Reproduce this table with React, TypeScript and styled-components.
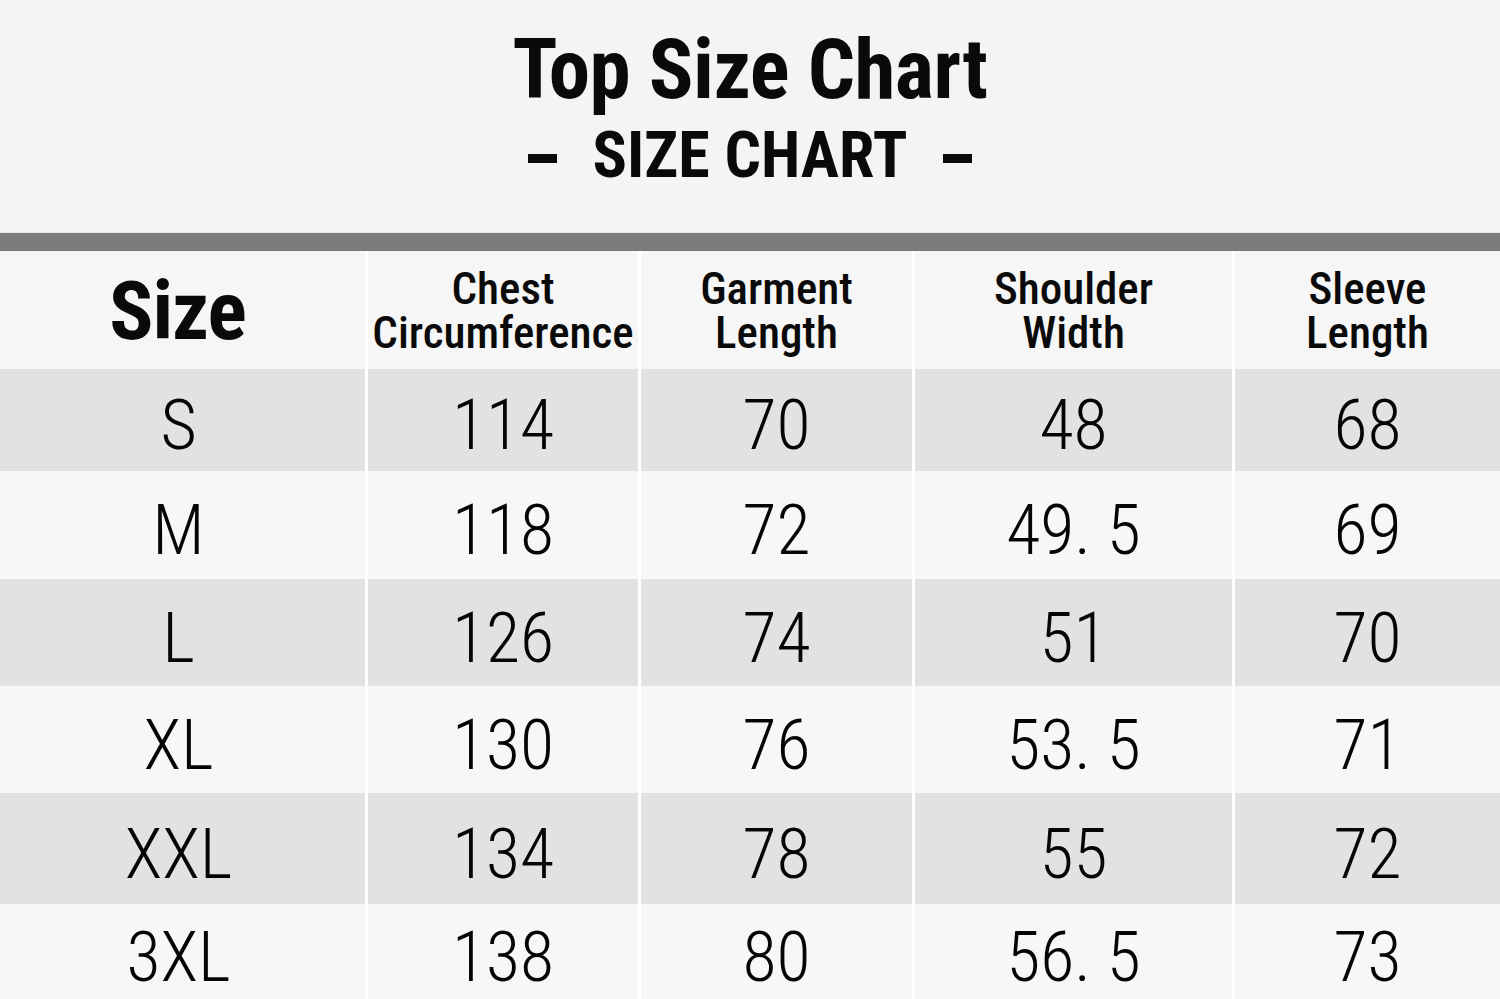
import React from "react";
import styled, { createGlobalStyle } from "styled-components";

const Global = createGlobalStyle`
  html, body { margin: 0; padding: 0; background: #f4f4f4; }
  body { font-family: "Roboto Condensed", "Liberation Sans", sans-serif; color: #0a0a0a; }
  #root { width: 1500px; height: 999px; overflow: hidden; }
`;

const Page = styled.div`
  width: 1500px;
  height: 999px;
  display: flex;
  flex-direction: column;
  overflow: hidden;
  background: #f4f4f4;
`;

const Header = styled.header`
  flex: none;
  height: 232px;
  display: flex;
  flex-direction: column;
  align-items: center;
  background: #f4f4f4;
  box-sizing: border-box;
  padding-top: 22px;
`;

const Title = styled.h1`
  margin: 0;
  font-family: "Roboto Condensed", sans-serif;
  font-weight: 700;
  font-size: 83px;
  line-height: 96px;
  letter-spacing: -0.5px;
  color: #0a0a0a;
`;

const Subtitle = styled.div`
  display: flex;
  align-items: center;
  gap: 36px;
  font-family: "Roboto Condensed", sans-serif;
  font-weight: 700;
  font-size: 64px;
  line-height: 76px;
  color: #0a0a0a;
`;

const Dash = styled.span`
  display: block;
  width: 29px;
  height: 9px;
  background: #0a0a0a;
  margin-top: 4px;
`;

const Band = styled.div`
  flex: none;
  height: 18px;
  background: #7b7b7b;
  border-top: 1px solid #e6e6e6;
`;

const Table = styled.div`
  flex: none;
  display: grid;
  grid-template-columns: 365px 270px 271px 317px 1fr;
  column-gap: 3px;
  background: #ffffff;
`;

const HeadCell = styled.div<{ $big?: boolean }>`
  height: 118px;
  background: #f6f6f6;
  display: flex;
  align-items: center;
  justify-content: center;
  text-align: center;
  font-family: "Roboto Condensed", sans-serif;
  font-weight: ${(p) => (p.$big ? 700 : 500)};
  font-size: ${(p) => (p.$big ? "82px" : "45px")};
  line-height: ${(p) => (p.$big ? "90px" : "44px")};
  color: #0a0a0a;
  padding-top: 2px;
  padding-right: ${(p) => (p.$big ? "10px" : "0")};
  box-sizing: border-box;
  white-space: pre-line;
  letter-spacing: ${(p) => (p.$big ? "-1px" : "0")};
`;

const Cell = styled.div<{ $shade: boolean; $h: number; $first?: boolean }>`
  height: ${(p) => p.$h}px;
  background: ${(p) => (p.$shade ? "#e2e2e2" : "#f7f7f7")};
  display: flex;
  align-items: center;
  justify-content: center;
  font-family: "Roboto Condensed", sans-serif;
  font-weight: 340;
  font-size: 70px;
  color: #050505;
  white-space: pre;
  padding-top: 10px;
  padding-right: ${(p) => (p.$first ? "8px" : "0")};
  box-sizing: border-box;
`;

const rows = [
  { size: "S", h: 102, v: ["114", "70", "48", "68"] },
  { size: "M", h: 108, v: ["118", "72", "49. 5", "69"] },
  { size: "L", h: 107, v: ["126", "74", "51", "70"] },
  { size: "XL", h: 107, v: ["130", "76", "53. 5", "71"] },
  { size: "XXL", h: 111, v: ["134", "78", "55", "72"] },
  { size: "3XL", h: 96, v: ["138", "80", "56. 5", "73"] },
];

const heads = ["Chest\nCircumference", "Garment\nLength", "Shoulder\nWidth", "Sleeve\nLength"];

export default function App() {
  return (
    <>
      <Global />
      <Page>
        <Header>
          <Title>Top Size Chart</Title>
          <Subtitle>
            <Dash />
            <span>SIZE CHART</span>
            <Dash />
          </Subtitle>
        </Header>
        <Band />
        <Table>
          <HeadCell $big>Size</HeadCell>
          {heads.map((h) => (
            <HeadCell key={h}>{h}</HeadCell>
          ))}
          {rows.map((r, i) => (
            <React.Fragment key={r.size}>
              <Cell $shade={i % 2 === 0} $h={r.h} $first>{r.size}</Cell>
              {r.v.map((v, j) => (
                <Cell key={j} $shade={i % 2 === 0} $h={r.h}>{v}</Cell>
              ))}
            </React.Fragment>
          ))}
        </Table>
      </Page>
    </>
  );
}
